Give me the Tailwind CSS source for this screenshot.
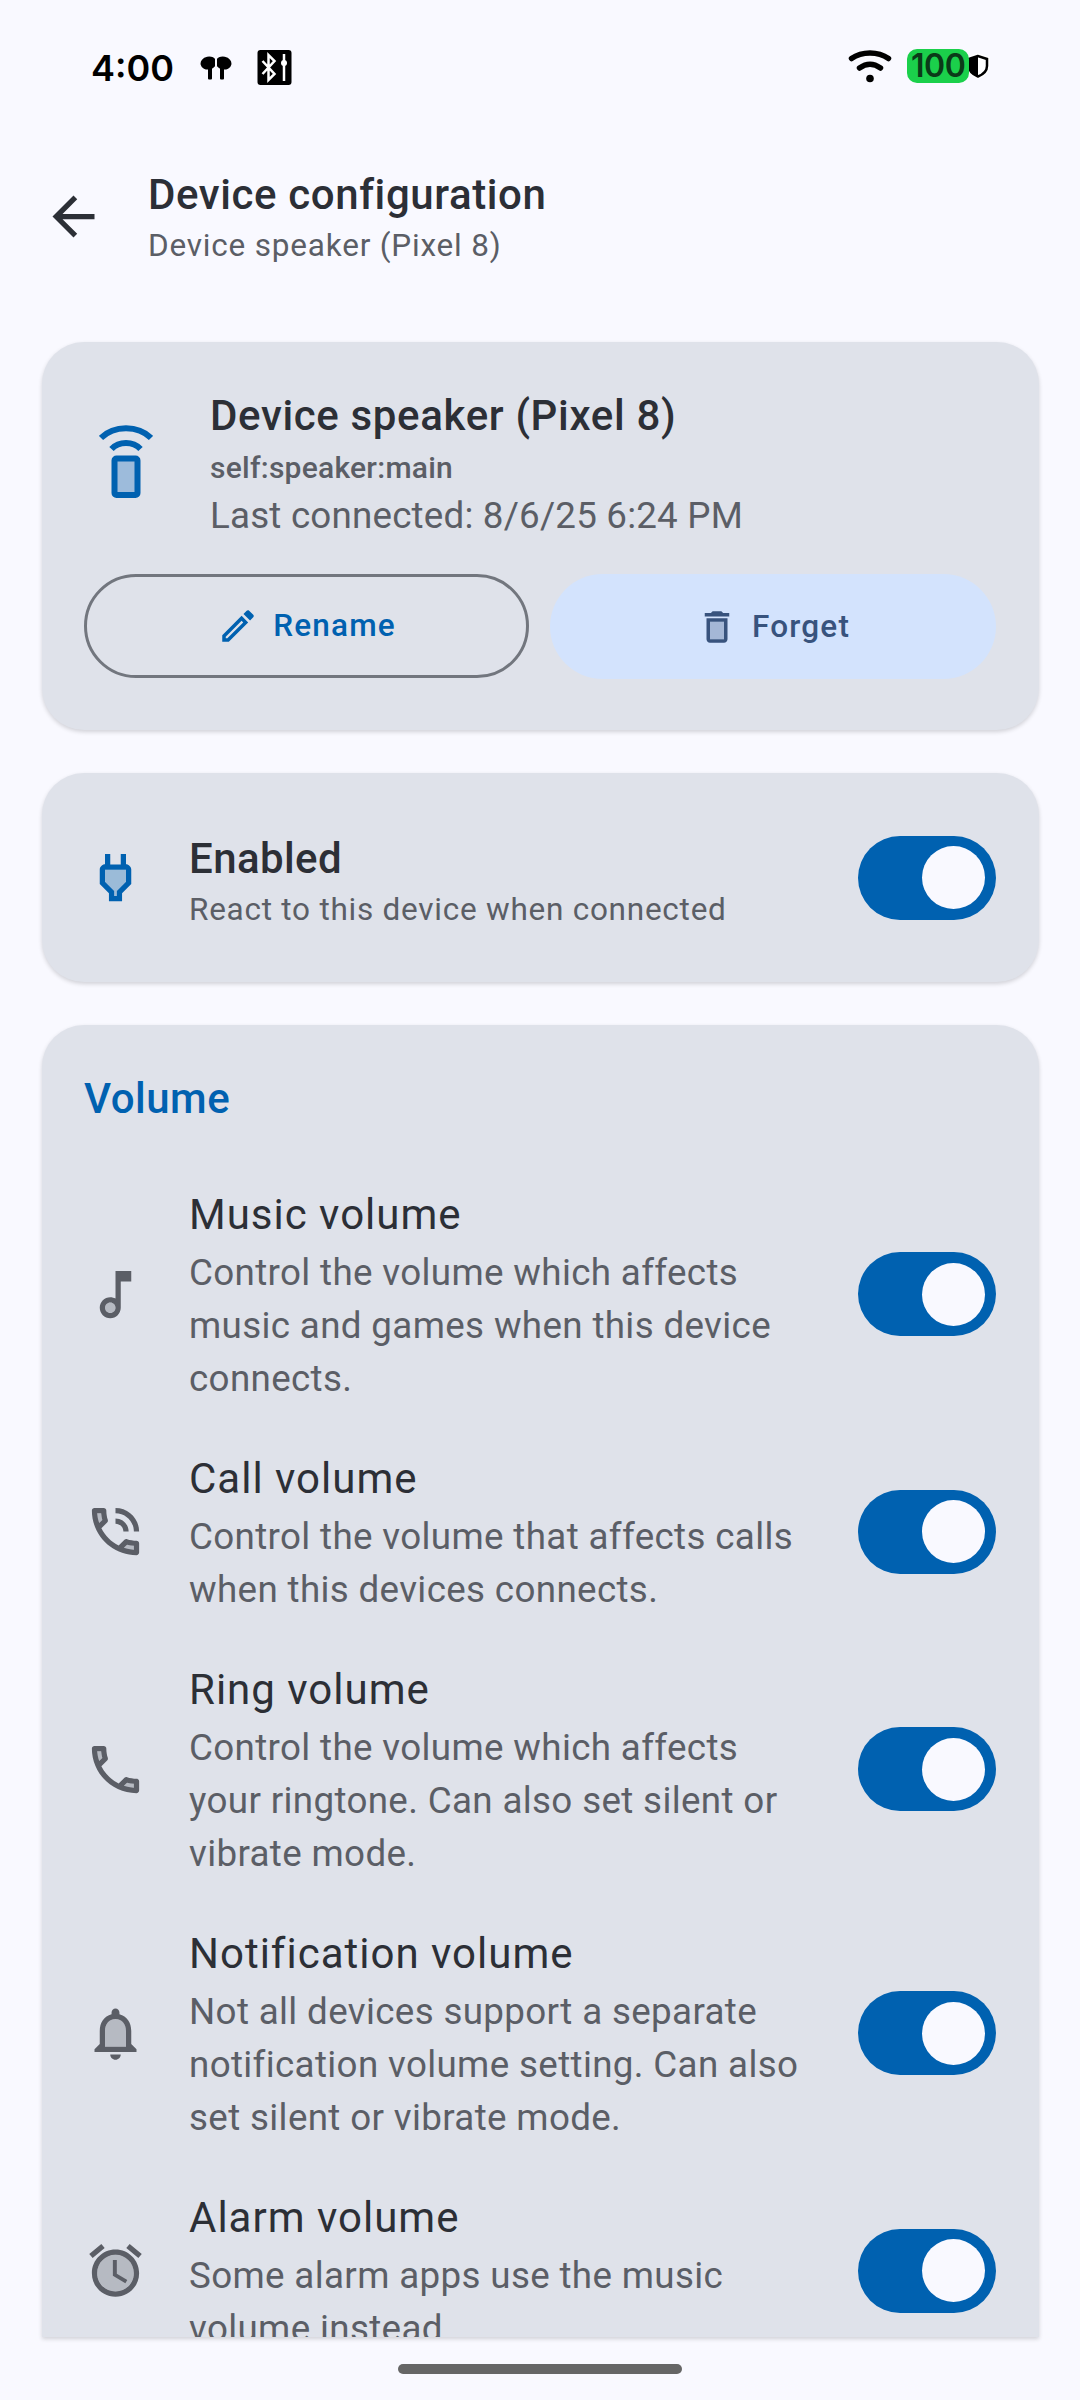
<!DOCTYPE html>
<html lang="en">
<head>
  <meta charset="UTF-8">
  <meta name="viewport" content="width=device-width, initial-scale=1.0">
  <title>Device configuration</title>
  <script src="https://cdn.jsdelivr.net/npm/@tailwindcss/browser@4"></script>
</head>
<body class="bg-[#f9f9ff] font-['Roboto',sans-serif] text-[#2c2f36]">
<div class="w-[1080px] h-[2400px] overflow-hidden flex flex-col">

  <!-- Status bar -->
  <div class="h-[134px] shrink-0 flex items-start pt-[48px] pl-[91px] pr-[90px] text-black">
    <span class="font-['Inter',sans-serif] font-semibold text-[36px] leading-[40px] w-[108px]">4:00</span>
    <svg class="w-[34px] h-[24px] mt-[8px]" viewBox="0 0 33 24" fill="#000">
      <ellipse cx="9" cy="7" rx="8" ry="6.500" transform="rotate(-12 9 7)"/>
      <ellipse cx="24" cy="7" rx="8" ry="6.500" transform="rotate(12 24 7)"/>
      <rect x="8.500" y="8" width="4" height="15.500" rx="1"/>
      <rect x="20.500" y="8" width="4" height="15.500" rx="1"/>
      <rect x="15.500" y="0" width="2" height="10" fill="#f9f9ff"/>
    </svg>
    <svg class="w-[35px] h-[35px] ml-[24px] mt-[2px]" viewBox="0 0 34 35">
      <rect width="34" height="35" rx="3" fill="#000"/>
      <path d="M5 11l12 13-6 6V5l6 6L5 24" fill="#000" stroke="#fff" stroke-width="2.500"/>
      <path d="M26.500 4v27" stroke="#fff" stroke-width="2.500"/>
      <circle cx="26.500" cy="13" r="3" fill="#fff"/>
    </svg>
    <div class="ml-auto flex items-start">
      <svg class="w-[44px] h-[34px] mt-[2px]" viewBox="0 0 44 34" fill="none" stroke="#000" stroke-linecap="round">
        <path d="M3.500 8.500C14 1 30 1 40.500 8.500" stroke-width="5.500"/>
        <path d="M11.500 18c7-5 14-5 21 0" stroke-width="5.500"/>
        <circle cx="22" cy="28.500" r="3.800" fill="#000" stroke="none"/>
      </svg>
      <div class="relative ml-[15px] w-[62px] h-[34px] mt-[1px] rounded-[10px] bg-[#1bd04b] flex items-center pl-[4px]">
        <span class="font-['Inter',sans-serif] font-semibold text-[32px] leading-none tracking-[-0.5px] text-[#0b3a18]">100</span>
      </div>
      <svg class="w-[24px] h-[26px] mt-[5px] -ml-[3px]" viewBox="0 0 24 26">
        <path d="M12 1L1 5v8c0 6 5 10 11 12 6-2 11-6 11-12V5z" fill="#fff" stroke="#fff" stroke-width="2"/>
        <path d="M12 3L3 6v7c0 5 4 8.500 9 10.500 5-2 9-5.500 9-10.500V6z" fill="none" stroke="#000" stroke-width="2.500"/>
        <path d="M12 3L3 6v7c0 5 4 8.500 9 10.500z" fill="#000"/>
      </svg>
    </div>
  </div>

  <!-- Top bar -->
  <div class="h-[208px] shrink-0 flex items-start">
    <div class="w-[148px] pt-[51px] pl-[42px]">
      <svg class="w-[63px] h-[63px] fill-[#2c2f36]" viewBox="0 0 24 24"><path d="M20 11H7.830l5.590-5.590L12 4l-8 8 8 8 1.410-1.410L7.830 13H20v-2z"/></svg>
    </div>
    <div>
      <div class="text-[42px] leading-[56px] font-medium tracking-[0.6px] mt-[33px]">Device configuration</div>
      <div class="text-[31.500px] leading-[44px] text-[#5b5e66] tracking-[0.8px] mt-[1px]">Device speaker (Pixel 8)</div>
    </div>
  </div>

  <!-- Content -->
  <div class="flex-1 min-h-0 ml-[42px] w-[997px] flex flex-col gap-[43px]">

    <!-- Device card -->
    <div class="bg-[#dfe2ea] rounded-[42px] shadow-[0_2px_4px_rgba(0,0,0,0.16)] h-[388px] shrink-0 pt-[35px] pl-[42px] pr-[43px]">
      <div class="flex h-[197px]">
        <div class="w-[126px] pt-[47px] pl-[15px]">
          <svg class="w-[54px] h-[74px]" viewBox="0 0 54 74" fill="none">
            <path d="M2 14C15 1 39 1 52 14" stroke="#0061b0" stroke-width="6"/>
            <path d="M12.500 25C20 17 34 17 41.500 25" stroke="#0061b0" stroke-width="6"/>
            <rect x="15.500" y="34.500" width="23" height="36.500" rx="2" fill="#9dbbdb" stroke="#0061b0" stroke-width="6"/>
          </svg>
        </div>
        <div>
          <div class="text-[42px] leading-[60px] font-medium tracking-[0.65px] mt-[9px]">Device speaker (Pixel 8)</div>
          <div class="text-[30px] leading-[44px] font-medium text-[#5b5e66] tracking-[0.25px]">self:speaker:main</div>
          <div class="text-[36.750px] leading-[50px] text-[#5b5e66] tracking-[0.2px] mt-[1px]">Last connected: 8/6/25 6:24 PM</div>
        </div>
      </div>
      <div class="flex gap-[21px]">
        <div class="w-[445px] h-[104px] rounded-full border-[3px] border-[#72767e] flex items-center justify-center gap-[14px] text-[#0061b0]">
          <svg class="w-[42px] h-[42px] fill-[#0061b0]" viewBox="0 0 24 24"><path d="M3 17.250V21h3.750L17.810 9.940l-3.750-3.750L3 17.250zM5.920 19H5v-.920l9.060-9.060.920.920L5.920 19zM20.710 5.630l-2.340-2.340c-.2-.2-.450-.290-.710-.290s-.510.100-.7.290l-1.830 1.830 3.750 3.750 1.830-1.830c.390-.390.390-1.020 0-1.410z"/></svg>
          <span class="text-[31.500px] font-medium tracking-[1.2px]">Rename</span>
        </div>
        <div class="w-[446px] h-[105px] rounded-full bg-[#d3e3fd] flex items-center justify-center gap-[14px] text-[#38537d]">
          <svg class="w-[42px] h-[42px] fill-[#38537d]" viewBox="0 0 24 24"><path opacity=".3" d="M8 9h8v10H8z"/><path d="M15.500 4l-1-1h-5l-1 1H5v2h14V4zM6 19c0 1.100.9 2 2 2h8c1.100 0 2-.9 2-2V7H6v12zM8 9h8v10H8V9z"/></svg>
          <span class="text-[31.500px] font-medium tracking-[1.2px]">Forget</span>
        </div>
      </div>
    </div>

    <!-- Enabled card -->
    <div class="bg-[#dfe2ea] rounded-[42px] shadow-[0_2px_4px_rgba(0,0,0,0.16)] h-[209px] shrink-0 flex items-center pl-[42px] pr-[43px]">
      <svg class="w-[63px] h-[63px] fill-[#0061b0] shrink-0" viewBox="0 0 24 24"><path opacity=".3" d="M8 13.650l3.500 3.520V19h1v-1.830l3.500-3.510V9H8z"/><path d="M16 7V3h-2v4h-4V3H8v4h-.010C7 6.990 6 7.990 6 8.990v5.490L9.500 18v3h5v-3l3.500-3.510v-5.500c0-1-1-2-2-1.990zm0 6.660l-3.500 3.510V19h-1v-1.830L8 13.650V9h8v4.660z"/></svg>
      <div class="ml-[42px] flex-1 pt-[6px]">
        <div class="text-[42px] leading-[58px] font-medium tracking-[0.4px]">Enabled</div>
        <div class="text-[31.500px] leading-[44px] text-[#5b5e66] tracking-[0.75px]">React to this device when connected</div>
      </div>
      <div class="w-[138px] h-[84px] rounded-full bg-[#0061b0] flex items-center justify-end pr-[11px]"><div class="w-[63px] h-[63px] rounded-full bg-[#f9f9ff]"></div></div>
    </div>

    <!-- Volume card -->
    <div class="bg-[#dfe2ea] rounded-t-[42px] shadow-[0_2px_4px_rgba(0,0,0,0.16)] flex-1 min-h-0 overflow-hidden mb-[63px] pl-[42px] pr-[43px]">
      <div class="text-[#0061b0] text-[42px] leading-[56px] font-medium tracking-[0.5px] pt-[46px] h-[150px] box-border">Volume</div>

      <div class="flex items-center h-[264px] -mt-[13px]">
        <svg class="w-[63px] h-[63px] fill-[#5b5e66] shrink-0" viewBox="0 0 24 24"><circle cx="10" cy="17" r="2" opacity=".3"/><path d="M12 3l.010 10.550c-.590-.340-1.270-.550-2-.550C7.790 13 6 14.790 6 17s1.790 4 4.010 4S14 19.210 14 17V7h4V3h-6zm-1.990 16c-1.100 0-2-.9-2-2s.9-2 2-2 2 .9 2 2-.9 2-2 2z"/></svg>
        <div class="ml-[42px] flex-1 pr-[50px]">
          <div class="text-[42px] leading-[62px] tracking-[1px]">Music volume</div>
          <div class="text-[36.750px] leading-[53px] text-[#5b5e66] tracking-[0.35px]">Control the volume which affects music and games when this device connects.</div>
        </div>
        <div class="w-[138px] h-[84px] rounded-full bg-[#0061b0] flex items-center justify-end pr-[11px] shrink-0"><div class="w-[63px] h-[63px] rounded-full bg-[#f9f9ff]"></div></div>
      </div>

      <div class="flex items-center h-[211px]">
        <svg class="w-[63px] h-[63px] fill-[#5b5e66] shrink-0" viewBox="0 0 24 24"><path opacity=".3" d="M6.540 5c.060.890.210 1.760.450 2.590l-1.200 1.200c-.410-1.200-.670-2.470-.760-3.790h1.510m9.860 12.020c.850.240 1.720.390 2.600.450v1.490c-1.320-.090-2.590-.350-3.800-.750l1.200-1.190"/><path d="M15 12h2c0-2.760-2.240-5-5-5v2c1.660 0 3 1.340 3 3zm4 0h2c0-4.970-4.030-9-9-9v2c3.870 0 7 3.130 7 7zM20 15.500c-1.250 0-2.450-.2-3.570-.570-.350-.110-.740-.030-1.020.240l-2.200 2.200c-2.830-1.440-5.150-3.750-6.590-6.590l2.200-2.210c.280-.260.360-.650.250-1C8.700 6.450 8.500 5.250 8.500 4c0-.550-.450-1-1-1H4c-.550 0-1 .450-1 1 0 9.390 7.610 17 17 17 .550 0 1-.450 1-1v-3.500c0-.550-.450-1-1-1zM5.030 5h1.500c.070.880.220 1.750.450 2.580l-1.200 1.210c-.400-1.210-.670-2.480-.750-3.790zM19 18.970c-1.320-.090-2.600-.350-3.800-.760l1.200-1.200c.850.240 1.720.390 2.600.450v1.510z"/></svg>
        <div class="ml-[42px] flex-1 pr-[50px]">
          <div class="text-[42px] leading-[62px] tracking-[1px]">Call volume</div>
          <div class="text-[36.750px] leading-[53px] text-[#5b5e66] tracking-[0.35px]">Control the volume that affects calls when this devices connects.</div>
        </div>
        <div class="w-[138px] h-[84px] rounded-full bg-[#0061b0] flex items-center justify-end pr-[11px] shrink-0"><div class="w-[63px] h-[63px] rounded-full bg-[#f9f9ff]"></div></div>
      </div>

      <div class="flex items-center h-[264px]">
        <svg class="w-[63px] h-[63px] fill-[#5b5e66] shrink-0" viewBox="0 0 24 24"><path opacity=".3" d="M19 17.470c-.880-.070-1.750-.220-2.600-.450l-1.190 1.190c1.200.410 2.480.670 3.800.750v-1.490zM6.540 5h-1.500c.090 1.320.350 2.590.750 3.790l1.200-1.200c-.240-.840-.390-1.710-.450-2.590z"/><path d="M20 21c.550 0 1-.450 1-1v-3.490c0-.550-.450-1-1-1-1.240 0-2.450-.2-3.570-.570-.1-.040-.210-.050-.310-.050-.260 0-.510.100-.710.290l-2.200 2.200c-2.830-1.450-5.150-3.760-6.590-6.590l2.200-2.200c.280-.280.360-.670.250-1.020C8.700 6.450 8.500 5.250 8.500 4c0-.550-.450-1-1-1H4c-.550 0-1 .450-1 1 0 9.390 7.610 17 17 17zm-3.600-3.980c.850.240 1.720.390 2.600.450v1.490c-1.320-.090-2.590-.350-3.800-.760l1.200-1.180zM5.030 5h1.500c.070.890.220 1.760.450 2.590L5.780 8.790c-.400-1.200-.660-2.470-.750-3.790z"/></svg>
        <div class="ml-[42px] flex-1 pr-[50px]">
          <div class="text-[42px] leading-[62px] tracking-[1px]">Ring volume</div>
          <div class="text-[36.750px] leading-[53px] text-[#5b5e66] tracking-[0.35px]">Control the volume which affects your ringtone. Can also set silent or vibrate mode.</div>
        </div>
        <div class="w-[138px] h-[84px] rounded-full bg-[#0061b0] flex items-center justify-end pr-[11px] shrink-0"><div class="w-[63px] h-[63px] rounded-full bg-[#f9f9ff]"></div></div>
      </div>

      <div class="flex items-center h-[264px]">
        <svg class="w-[63px] h-[63px] fill-[#5b5e66] shrink-0" viewBox="0 0 24 24"><path opacity=".3" d="M12 6.500c-2.490 0-4 2.020-4 4.500v6h8v-6c0-2.480-1.510-4.500-4-4.500z"/><path d="M12 22c1.100 0 2-.9 2-2h-4c0 1.100.9 2 2 2zm6-6v-5c0-3.070-1.630-5.640-4.500-6.320V4c0-.830-.670-1.500-1.500-1.500s-1.500.670-1.500 1.500v.680C7.640 5.360 6 7.920 6 11v5l-2 2v1h16v-1l-2-2zm-2 1H8v-6c0-2.480 1.510-4.500 4-4.500s4 2.020 4 4.500v6z"/></svg>
        <div class="ml-[42px] flex-1 pr-[50px]">
          <div class="text-[42px] leading-[62px] tracking-[1px]">Notification volume</div>
          <div class="text-[36.750px] leading-[53px] text-[#5b5e66] tracking-[0.35px]">Not all devices support a separate notification volume setting. Can also set silent or vibrate mode.</div>
        </div>
        <div class="w-[138px] h-[84px] rounded-full bg-[#0061b0] flex items-center justify-end pr-[11px] shrink-0"><div class="w-[63px] h-[63px] rounded-full bg-[#f9f9ff]"></div></div>
      </div>

      <div class="flex items-center h-[211px]">
        <svg class="w-[63px] h-[63px] fill-[#5b5e66] shrink-0" viewBox="0 0 24 24"><circle cx="12" cy="13" r="7" opacity=".3"/><path d="M22 5.720l-4.600-3.860-1.290 1.530 4.600 3.860L22 5.720zM7.880 3.390L6.600 1.860 2 5.710l1.290 1.530 4.590-3.850zM12.500 8H11v6l4.750 2.850.750-1.230-4-2.370V8zM12 4c-4.970 0-9 4.030-9 9s4.020 9 9 9c4.970 0 9-4.030 9-9s-4.030-9-9-9zm0 16c-3.870 0-7-3.130-7-7s3.130-7 7-7 7 3.130 7 7-3.130 7-7 7z"/></svg>
        <div class="ml-[42px] flex-1 pr-[50px]">
          <div class="text-[42px] leading-[62px] tracking-[1px]">Alarm volume</div>
          <div class="text-[36.750px] leading-[53px] text-[#5b5e66] tracking-[0.35px]">Some alarm apps use the music volume instead</div>
        </div>
        <div class="w-[138px] h-[84px] rounded-full bg-[#0061b0] flex items-center justify-end pr-[11px] shrink-0"><div class="w-[63px] h-[63px] rounded-full bg-[#f9f9ff]"></div></div>
      </div>
    </div>
  </div>

  <!-- Gesture handle -->
  <div class="absolute left-[398px] top-[2364px] w-[284px] h-[10px] rounded-full bg-[#666666]"></div>
</div>
</body>
</html>
